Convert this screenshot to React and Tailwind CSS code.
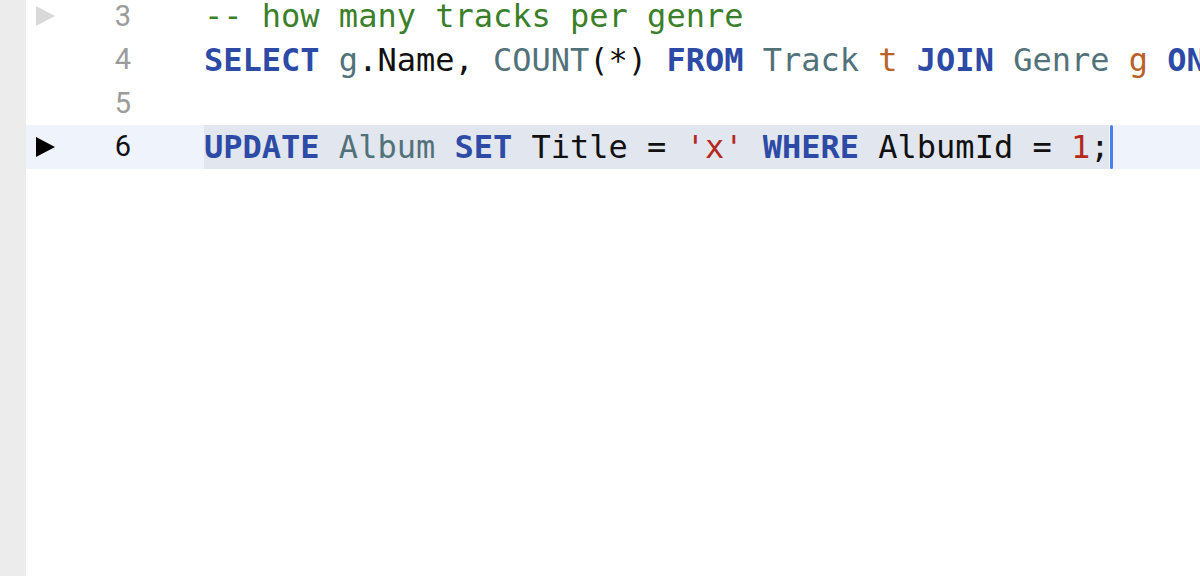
import React from 'react';

const KW = 'text-[#2d4ba6] font-bold';
const TY = 'text-[#52727a]';
const AL = 'text-[#b8612a]';
const ST = 'text-[#b5281e]';
const CM = 'text-[#3b7f2b]';
const PL = 'text-[#111111]';

const lines = [
  { n: 3, play: 'gray', tokens: [[CM, '-- how many tracks per genre']] },
  {
    n: 4,
    tokens: [
      [KW, 'SELECT'], [PL, ' '], [TY, 'g'], [PL, '.Name, '], [TY, 'COUNT'], [PL, '(*) '],
      [KW, 'FROM'], [PL, ' '], [TY, 'Track'], [PL, ' '], [AL, 't'], [PL, ' '], [KW, 'JOIN'],
      [PL, ' '], [TY, 'Genre'], [PL, ' '], [AL, 'g'], [PL, ' '], [KW, 'ON'], [PL, ' '],
      [AL, 't'], [PL, '.GenreId = '], [AL, 'g'], [PL, '.GenreId '], [KW, 'GROUP BY'], [PL, ' '],
      [AL, 'g'], [PL, '.Name;'],
    ],
  },
  { n: 5, tokens: [] },
  {
    n: 6,
    play: 'black',
    current: true,
    tokens: [
      [KW, 'UPDATE'], [PL, ' '], [TY, 'Album'], [PL, ' '], [KW, 'SET'], [PL, ' Title = '],
      [ST, "'x'"], [PL, ' '], [KW, 'WHERE'], [PL, ' AlbumId = '], [ST, '1'], [PL, ';'],
    ],
  },
];

const Play = ({ color }) => (
  <svg width="19" height="20" viewBox="0 0 19 20">
    <path d="M0 0 L19 10 L0 20 Z" fill={color === 'black' ? '#000000' : '#d9d9d9'} />
  </svg>
);

const Row = ({ line }) => (
  <div className={`flex items-center h-[43.5px] ${line.current ? 'bg-[#eef3fc]' : ''}`}>
    <div className="w-[29px] pl-[10px] flex items-center">
      {line.play && <Play color={line.play} />}
    </div>
    <div
      className={`w-[76px] text-right text-[29px] leading-none ${line.current ? 'text-[#111111]' : 'text-[#9b9b9b]'}`}
      style={{ fontFamily: 'Roboto, "Noto Sans", sans-serif' }}
    >
      {line.n}
    </div>
    <div className="w-[73px]" />
    <div className="flex-1 h-full flex items-center overflow-hidden">
      <div
        className={`h-full flex items-center whitespace-pre text-[32px] leading-none ${line.current ? 'bg-[#e2e6ef]' : ''}`}
        style={{ fontFamily: '"DejaVu Sans Mono", "Liberation Mono", monospace' }}
      >
        {line.tokens.map(([cls, t], i) => (
          <span key={i} className={cls}>{t}</span>
        ))}
      </div>
      {line.current && <div className="w-[3px] h-full bg-[#4a7ff0] rounded-full ml-px" />}
    </div>
  </div>
);

export default function App() {
  return (
    <div className="w-[1200px] h-[576px] flex bg-white overflow-hidden">
      <div className="w-[26px] h-full bg-[#ececec]" />
      <div className="flex-1 h-full overflow-hidden">
        <div className="-mt-[5.5px] flex flex-col">
          {lines.map((l) => (
            <Row key={l.n} line={l} />
          ))}
        </div>
      </div>
    </div>
  );
}
